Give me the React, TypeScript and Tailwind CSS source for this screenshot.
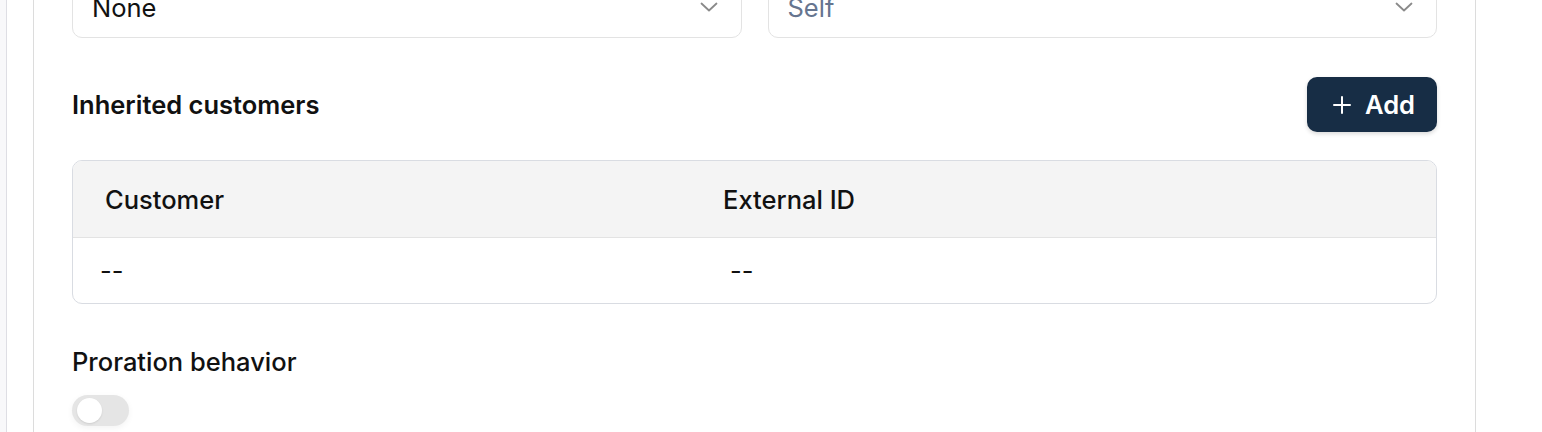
import React from 'react'

function Chevron() {
  return (
    <svg width="18" height="10" viewBox="0 0 18 10" fill="none">
      <polyline points="1.5,1.5 9,8.5 16.5,1.5" stroke="#8a8a8a" strokeWidth="1.8" strokeLinecap="round" strokeLinejoin="round" />
    </svg>
  )
}

function Select({ value, placeholder }: { value: string; placeholder?: boolean }) {
  return (
    <div className="h-[62px] -mt-[24px] border border-[#e3e3e3] rounded-[10px] bg-white flex items-center justify-between pl-[19px] pr-[23px]">
      <span className={placeholder ? 'text-[#66758f]' : 'text-[#111111]'}>{value}</span>
      <Chevron />
    </div>
  )
}

export default function App() {
  return (
    <div
      className="w-[1542px] h-[432px] overflow-hidden bg-white flex text-[25.5px] leading-[37px]"
      style={{ fontFamily: 'Inter, "Noto Sans", sans-serif' }}
    >
      <div className="w-[6px] bg-[#f8f8fa] shrink-0" />
      <div className="flex-1 border-l border-[#dedee4] pl-[26px]">
        <div className="w-[1443px] h-full border-x border-[#dcdcdc] px-[38px]">
          {/* selects */}
          <div className="grid grid-cols-2 gap-[26px]">
            <Select value="None" />
            <Select value="Self" placeholder />
          </div>

          {/* inherited customers */}
          <div className="mt-[39px] flex items-center justify-between">
            <h2 className="font-semibold text-[#111111]">Inherited customers</h2>
            <button className="h-[55px] rounded-[10px] bg-[#172d45] text-white font-semibold flex items-center gap-[14px] pl-[26px] pr-[22px] shadow-[0_2px_4px_rgba(0,0,0,0.15)]">
              <svg width="18" height="18" viewBox="0 0 18 18" fill="none">
                <path d="M9 1v16M1 9h16" stroke="white" strokeWidth="2" strokeLinecap="round" />
              </svg>
              Add
            </button>
          </div>

          <div className="mt-[28px] border border-[#d9dce2] rounded-[10px] overflow-hidden">
            <div className="h-[77px] bg-[#f4f4f4] border-b border-[#e3e3e3] flex items-center font-medium text-[#111111]">
              <div className="w-[650px] pl-[32px]">Customer</div>
              <div>External ID</div>
            </div>
            <div className="h-[65px] flex items-center text-[#111111]">
              <div className="w-[657px] pl-[27px]">--</div>
              <div>--</div>
            </div>
          </div>

          <div className="mt-[39px] font-medium text-[#111111]">Proration behavior</div>
          <div className="mt-[15px] w-[57px] h-[31px] rounded-full bg-[#e5e5e5] flex items-center pl-[5px] shadow-[0_2px_6px_rgba(0,0,0,0.05)]">
            <div className="w-[25px] h-[25px] rounded-full bg-white shadow-[0_1px_2px_rgba(0,0,0,0.1)]" />
          </div>
        </div>
      </div>
    </div>
  )
}
